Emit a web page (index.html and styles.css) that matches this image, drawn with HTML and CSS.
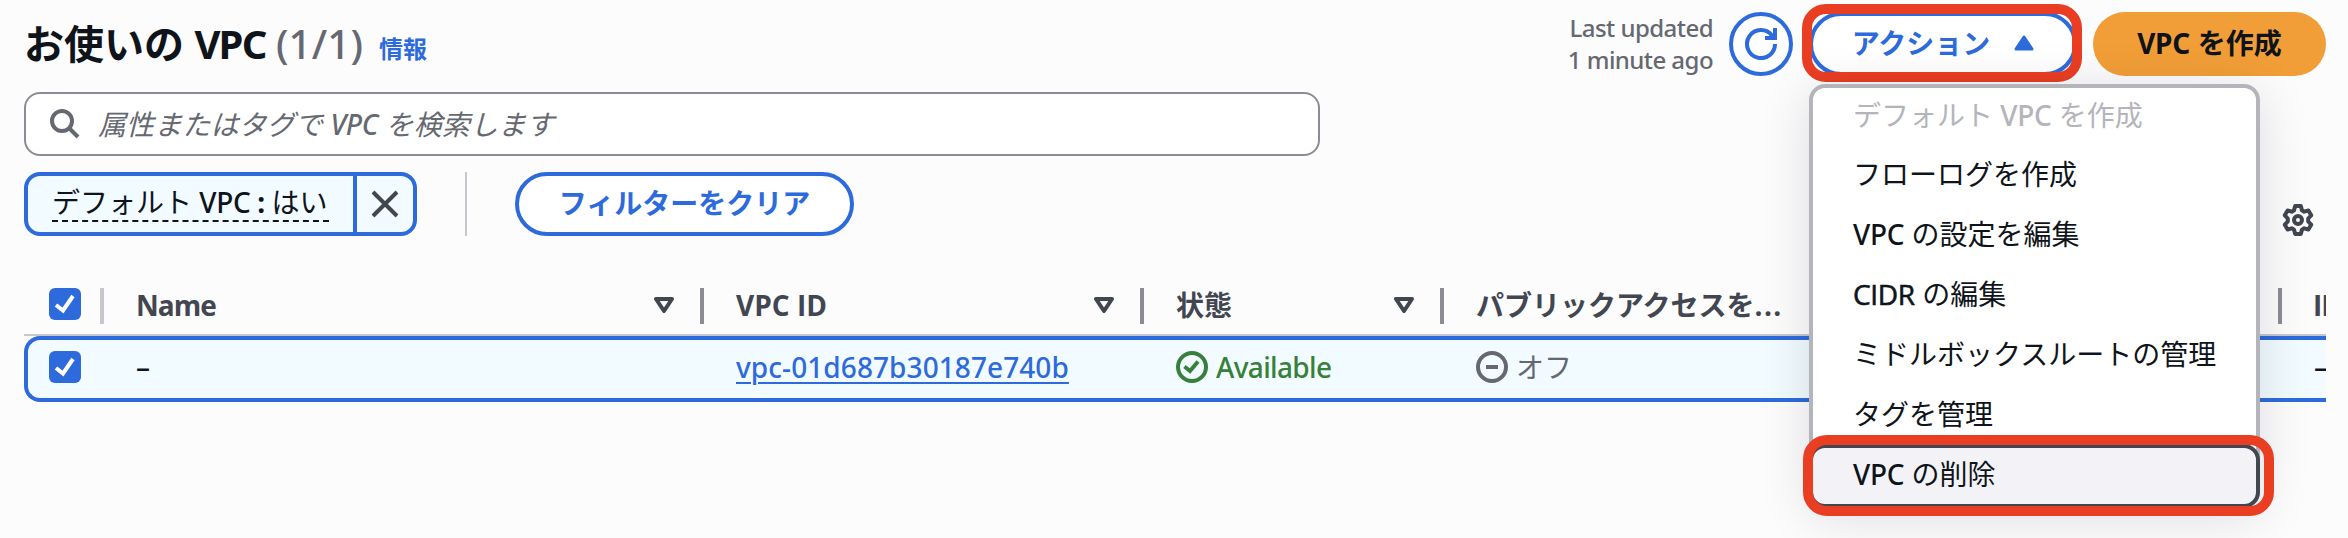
FILE: index.html
```html
<!DOCTYPE html>
<html lang="ja">
<head>
<meta charset="utf-8">
<title>お使いの VPC</title>
<link rel="stylesheet" href="styles.css">
</head>
<body>
<main class="panel">
  <header class="header">
    <h1 class="title">お使いの <span class="title-en">VPC</span> <span class="counter">(1/1)</span></h1>
    <a class="info">情報</a>
    <div class="actions">
      <p class="updated">Last updated<br>1 minute ago</p>
      <button class="btn refresh" aria-label="refresh">
        <svg width="32" height="32" viewBox="0 0 32 32" fill="none" stroke="currentColor" stroke-width="4"><path d="M30 16a14 14 0 1 1-3-8.600l2.500 3.600"/><path d="M20 10h10V0"/></svg>
      </button>
      <div class="dropdown">
        <button class="btn action">アクション<svg class="caret" width="20" height="16" viewBox="0 0 20 16"><path d="M10 2 18 14H2Z" fill="currentColor" stroke="currentColor" stroke-width="3" stroke-linejoin="round"/></svg></button>
        <div class="mark mark-button"></div>
        <ul class="menu">
          <li class="item disabled">デフォルト <span class="en">VPC</span> を作成</li>
          <li class="item">フローログを作成</li>
          <li class="item"><span class="en">VPC</span> の設定を編集</li>
          <li class="item"><span class="en cidr">CIDR</span> の編集</li>
          <li class="item">ミドルボックスルートの管理</li>
          <li class="item">タグを管理</li>
          <li class="item active"><span class="en">VPC</span> の削除</li>
        </ul>
        <div class="mark mark-item"></div>
      </div>
      <button class="btn create"><span class="en">VPC</span> を作成</button>
    </div>
  </header>

  <div class="search">
    <svg width="32" height="32" viewBox="0 0 32 32" fill="none" stroke="currentColor" stroke-width="4"><circle cx="14" cy="13" r="10"/><path d="m21 20 9 9"/></svg>
    <span class="placeholder">属性またはタグで <span class="en">VPC</span> を検索します</span>
  </div>

  <div class="filters">
    <div class="token">
      <span class="token-label"><span class="token-text">デフォルト <span class="en">VPC</span><b class="colon"> : </b>はい</span></span>
      <span class="token-close"><svg width="32" height="32" viewBox="0 0 32 32" stroke="currentColor" stroke-width="4"><path d="m4 4 24 24M28 4 4 28"/></svg></span>
    </div>
    <i class="rule"></i>
    <button class="btn clear">フィルターをクリア</button>
    <svg class="gear" width="32" height="32" viewBox="0 0 32 32" fill="none" stroke="currentColor" stroke-width="4" stroke-linejoin="round"><path d="M13.200 2h5.600l1.200 4.400 2.200 1.300 4.200-1.200 2.800 4.800-3 3.200v3l3 3.200-2.800 4.800-4.200-1.200-2.200 1.300-1.200 4.400h-5.600L12 25.600l-2.200-1.300-4.200 1.200-2.800-4.800 3-3.200v-3l-3-3.200 2.800-4.800 4.200 1.200L12 6.400z"/><circle cx="16" cy="16" r="4"/></svg>
  </div>

  <div class="table">
    <div class="row head">
      <div class="cell check"><svg class="box" viewBox="0 0 32 32"><path d="m7 17 7 5.500L24 8"/></svg></div>
      <div class="cell"><span class="name">Name</span><svg class="sort" viewBox="0 0 20 16"><path d="M2 2h16l-8 12Z"/></svg></div>
      <div class="cell"><span>VPC ID</span><svg class="sort" viewBox="0 0 20 16"><path d="M2 2h16l-8 12Z"/></svg></div>
      <div class="cell">状態<svg class="sort" viewBox="0 0 20 16"><path d="M2 2h16l-8 12Z"/></svg></div>
      <div class="cell">パブリックアクセスを<span class="dots">...</span></div>
      <div class="cell last">IP</div>
    </div>
    <div class="row selected">
      <div class="cell check"><svg class="box" viewBox="0 0 32 32"><path d="m7 17 7 5.500L24 8"/></svg></div>
      <div class="cell">–</div>
      <div class="cell"><a class="link">vpc-01d687b30187e740b</a></div>
      <div class="cell ok"><svg class="status" viewBox="0 0 32 32"><circle cx="16" cy="16" r="14"/><path d="m8.500 15.500 5.500 4.500 8-9.500"/></svg><span class="available">Available</span></div>
      <div class="cell off"><svg class="status" viewBox="0 0 32 32"><circle cx="16" cy="16" r="14"/><path d="M10 16h12"/></svg>オフ</div>
      <div class="cell last">–</div>
    </div>
  </div>
</main>
</body>
</html>
```
FILE: styles.css
```css
* { box-sizing: border-box; }

body {
  margin: 0;
  height: 538px;
  overflow: hidden;
  background: #fcfcfd;
  color: #0f141a;
  font: 400 28px/40px "Noto Sans", "Noto Sans CJK JP", sans-serif;
}

.panel { padding: 12px 22px 0 24px; }
.en { font-weight: 500; letter-spacing: -0.3px; }
.cidr { font-family: "Open Sans", sans-serif; -webkit-text-stroke: 0.6px currentColor; }

.header { display: flex; height: 64px; align-items: center; }
.title { margin: 0; font-size: 40px; line-height: 62px; font-weight: 700; }
.title-en { letter-spacing: -1.8px; }
.counter { color: #656871; font-weight: 500; letter-spacing: 0.2px; }
.info { margin-left: 16px; padding-top: 10px; font-size: 24px; font-weight: 700; color: #2d6adb; }
.actions { margin-left: auto; display: flex; align-items: center; gap: 16px; }
.updated { margin: 0; font-size: 24px; line-height: 32px; font-weight: 500; letter-spacing: -0.55px; color: #656871; text-align: right; }

.btn {
  display: flex;
  align-items: center;
  justify-content: center;
  height: 64px;
  padding: 0 0 2px;
  border: 4px solid #2d6adb;
  border-radius: 32px;
  background: #fff;
  color: #2d6adb;
  font: inherit;
  font-weight: 700;
}
.refresh { width: 64px; padding: 0; }
.action { width: 268px; gap: 24px; }
.create { width: 233px; border: 0; background: #f19e38; color: #0f141a; }
.create .en { font-weight: 700; margin-right: 8px; }
.clear { width: 339px; }

.dropdown { position: relative; z-index: 2; }
.menu {
  position: absolute;
  top: 72px;
  left: 0;
  width: 451px;
  height: 424px;
  margin: 0;
  padding: 0;
  list-style: none;
  background: #fff;
  border: 4px solid #b4b4bb;
  border-radius: 16px;
  box-shadow: 0 8px 50px 2px rgba(0, 7, 22, .12);
}
.item { height: 60px; padding: 8px 40px; white-space: nowrap; }
.item:first-child { height: 58px; padding-top: 7px; }
.item.disabled { color: #b4b4bb; }
.item.active {
  height: 64px;
  margin: -2px -4px 0;
  padding: 6px 40px;
  border: 4px solid #424650;
  border-radius: 16px;
  background: #f3f3f7;
}
.mark { position: absolute; border: 10px solid #ea3e23; }
.mark-button { top: -8px; left: -7px; width: 280px; height: 78px; border-radius: 24px; }
.mark-item { top: 423px; left: -6px; width: 471px; height: 81px; border-radius: 24px; z-index: 1; }

.search {
  display: flex;
  align-items: center;
  gap: 18px;
  width: 1296px;
  height: 64px;
  margin-top: 16px;
  padding: 0 22px;
  border: 2px solid #8c8c94;
  border-radius: 16px;
  background: #fff;
  color: #656871;
}
.placeholder { font-style: italic; letter-spacing: 0.12px; }

.filters { display: flex; height: 64px; margin-top: 16px; }
.token {
  display: flex;
  width: 393px;
  border: 4px solid #2d6adb;
  border-radius: 16px;
  background: #f2fbff;
}
.token-label { width: 329px; padding: 6px 0 0 24px; border-right: 4px solid #2d6adb; white-space: nowrap; }
.token-text { display: block; width: 277px; height: 40px; border-bottom: 2px dashed #0f141a; }
.colon { font-weight: 700; letter-spacing: -0.5px; }
.token-close { flex: 1; display: flex; align-items: center; justify-content: center; color: #424650; }
.rule { width: 2px; margin: 0 48px; background: #c6c6cd; }
.gear { margin: 32px 12px 0 auto; color: #424650; }

.table { margin-top: 36px; overflow: hidden; }
.row { display: grid; grid-template-columns: 80px 600px 440px 300px 838px 1fr; }
.head { height: 64px; border-bottom: 2px solid #c6c6cd; color: #424650; font-family: "Open Sans", "Noto Sans CJK JP", sans-serif; font-weight: 700; }
.cell { display: flex; align-items: center; min-width: 0; padding-left: 32px; white-space: nowrap; }
.head .cell { height: 36px; margin-top: 16px; padding: 0 26px 2px 32px; border-right: 4px solid #8c8c94; line-height: 34px; }
.head .check { padding: 0 0 4px 25px; border-color: #c6c6cd; }
.head .last { border: 0; padding: 0 0 2px 31px; letter-spacing: -1px; }
.name { letter-spacing: -1px; }
.dots { letter-spacing: 1.3px; }
.check { padding-left: 25px; }
.box { flex: none; width: 32px; height: 32px; border-radius: 6px; background: #2d6adb; fill: none; stroke: #fff; stroke-width: 4; }
.sort { width: 20px; height: 16px; margin-left: auto; fill: none; stroke: #424650; stroke-width: 4; stroke-linejoin: round; }
.selected { height: 66px; border: 4px solid #2d6adb; border-right: 0; border-radius: 16px 0 0 16px; background: #f2fbff; font-weight: 500; }
.selected .cell { margin-left: -4px; margin-right: 4px; padding-bottom: 5px; }
.selected .last { margin-right: 0; }
.link { color: #2d6adb; letter-spacing: 0.08px; text-decoration: underline; text-underline-offset: 4px; text-decoration-thickness: 2px; }
.status { width: 32px; height: 32px; margin-right: 8px; fill: none; stroke: currentColor; stroke-width: 4; }
.ok { color: #36803a; }
.available { letter-spacing: -0.65px; }
.off { color: #656871; font-weight: 400; }
```
